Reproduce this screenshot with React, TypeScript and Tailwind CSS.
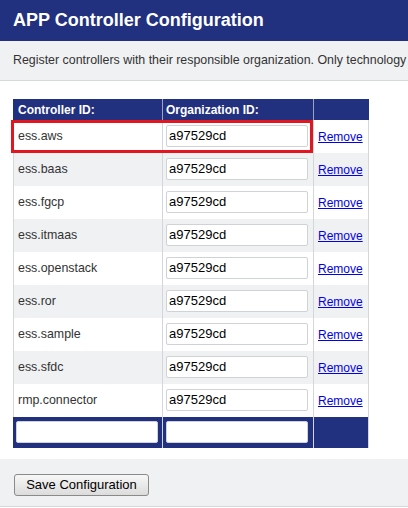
const controllers = [
  "ess.aws",
  "ess.baas",
  "ess.fgcp",
  "ess.itmaas",
  "ess.openstack",
  "ess.ror",
  "ess.sample",
  "ess.sfdc",
  "rmp.connector",
];

const App = () => {
  return (
    <div className="w-[408px] h-[508px] overflow-hidden bg-white font-['Liberation_Sans',Arial,sans-serif]">
      {/* Title bar */}
      <div className="h-[41px] bg-[#21307f] flex items-center px-[13px]">
        <h1 className="text-white text-[18px] font-bold whitespace-nowrap">APP Controller Configuration</h1>
      </div>

      {/* Description */}
      <div className="h-[40px] bg-[#f0f1f3] border-b border-[#d5d9dc] flex items-center pl-[13px]">
        <p className="text-[#333] text-[12.4px] whitespace-nowrap">
          Register controllers with their responsible organization. Only technology
        </p>
      </div>

      {/* Table */}
      <div className="relative mt-[18px] ml-[13px] w-[356px]">
        <div className="flex h-[21px] bg-[#21307f] text-white text-[12px] font-bold">
          <div className="w-[150px] border-r border-[#9da3bf] pl-[5px] flex items-center">Controller ID:</div>
          <div className="w-[151px] border-r border-[#9da3bf] pl-[3px] flex items-center">Organization ID:</div>
          <div className="w-[55px]" />
        </div>

        {controllers.map((id, i) => (
          <div
            key={id}
            className={`flex h-[33px] border-l border-r border-[#d3d6da] ${i % 2 === 0 ? "bg-white" : "bg-[#f0f1f3]"}`}
          >
            <div className="w-[149px] border-r border-[#d3d6da] pl-[4px] flex items-center text-[12.4px] text-[#333]">
              {id}
            </div>
            <div className="w-[151px] border-r border-[#d3d6da] pl-[3px] pt-[3px]">
              <input
                type="text"
                defaultValue="a97529cd"
                className="w-[142px] h-[22px] bg-white border border-[#cfd2d6] rounded-[2px] px-[2px] text-[13px] text-black outline-none"
              />
            </div>
            <div className="w-[54px] pl-[4px] flex items-center">
              <a href="#" className="text-[12px] text-[#0000ee] underline">
                Remove
              </a>
            </div>
          </div>
        ))}

        <div className="flex h-[31px] bg-[#21307f] border-r border-[#d3d6da]">
          <div className="w-[150px] border-r border-[#d3d6da] pl-[3px] pt-[3px]">
            <input
              type="text"
              className="w-[142px] h-[22px] bg-white border border-[#cfd2d6] rounded-[2px] outline-none"
            />
          </div>
          <div className="w-[151px] border-r border-[#d3d6da] pl-[3px] pt-[3px]">
            <input
              type="text"
              className="w-[142px] h-[22px] bg-white border border-[#cfd2d6] rounded-[2px] outline-none"
            />
          </div>
          <div className="w-[54px]" />
        </div>

        {/* Highlight box */}
        <div className="absolute left-[-2px] top-[21px] w-[302px] h-[33px] border-[3px] border-[#e3151e] pointer-events-none" />
      </div>

      {/* Footer */}
      <div className="mt-[11px] h-[48px] bg-[#f0f1f3] border-b border-[#d5d9dc] pl-[14px] pt-[13px]">
        <button
          type="button"
          className="w-[135px] h-[22px] border border-[#8a8a8a] rounded-[3px] bg-gradient-to-b from-[#f7f7f7] to-[#dcdcdc] text-[13px] text-black"
        >
          Save Configuration
        </button>
      </div>
    </div>
  );
};

export default App;
